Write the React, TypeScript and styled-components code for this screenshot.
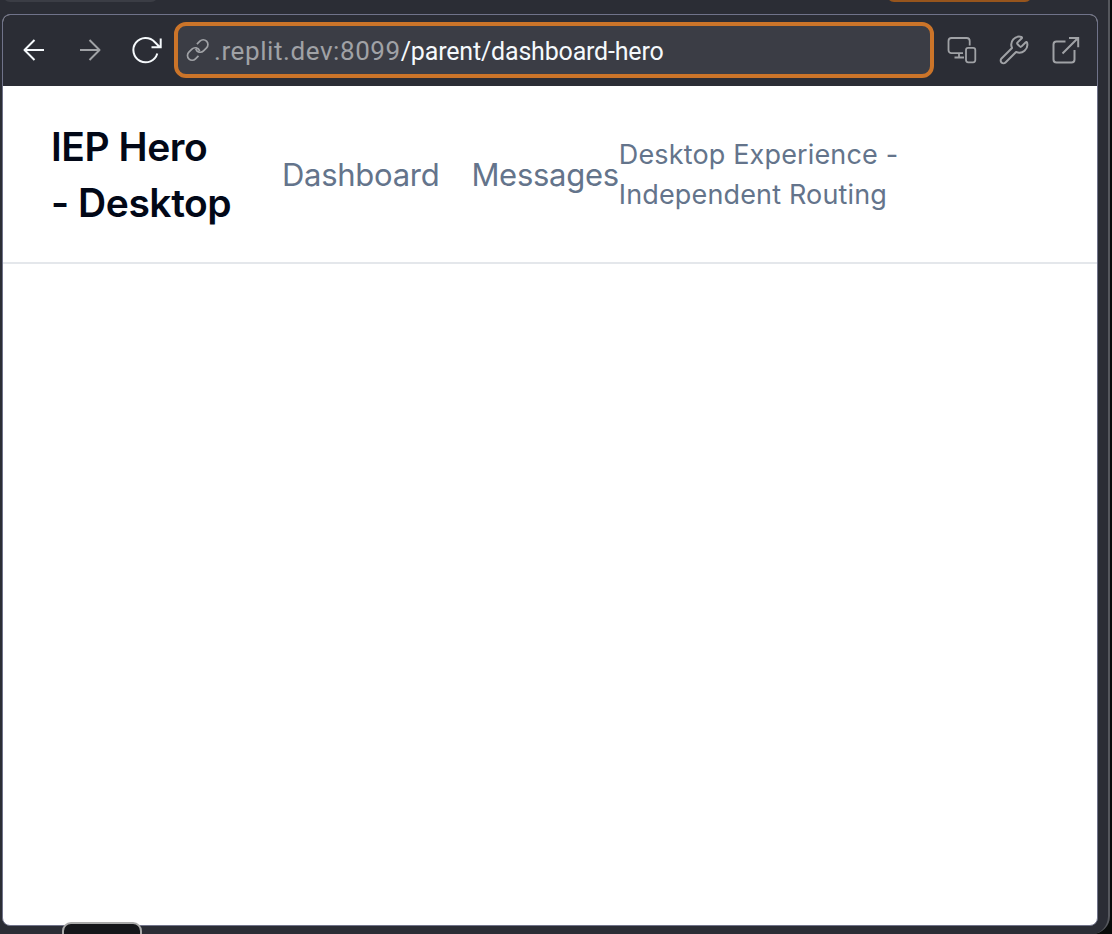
import React from "react";
import styled, { createGlobalStyle } from "styled-components";
import { Wrench } from "lucide-react";

const GlobalStyle = createGlobalStyle`
  *, *::before, *::after { box-sizing: border-box; }
  body { margin: 0; background: #090b0a; overflow: hidden; }
`;

const Workspace = styled.div`
  position: relative;
  width: 1110px;
  height: 934px;
  padding: 14px 11px 8px 2px;
  background: #2b2d35;
  border-right: 2px solid #55575d;
  border-bottom-right-radius: 18px;
  overflow: hidden;
`;

const TabEdge = styled.div<{ $left: number; $width: number; $color: string }>`
  position: absolute;
  top: -12px;
  left: ${(p) => p.$left}px;
  width: ${(p) => p.$width}px;
  height: 14px;
  border-radius: 8px;
  background: ${(p) => p.$color};
`;

const Pane = styled.section`
  display: flex;
  flex-direction: column;
  width: 1096px;
  height: 912px;
  border: 1px solid #70738a;
  border-radius: 8px;
  background: #fff;
  overflow: hidden;
`;

const Toolbar = styled.div`
  display: flex;
  align-items: center;
  flex: none;
  height: 71px;
  padding: 0 0 1px 15px;
  background: #2b2d35;
`;

const ToolButton = styled.button<{ $gap?: number; $color?: string }>`
  display: flex;
  flex: none;
  width: 32px;
  height: 32px;
  margin: 0 ${(p) => p.$gap ?? 0}px 0 0;
  padding: 0;
  border: 0;
  background: none;
  color: ${(p) => p.$color ?? "#a0a2a6"};

  svg { display: block; }
`;

const AddressBar = styled.div`
  display: flex;
  align-items: center;
  flex: none;
  width: 760px;
  height: 56px;
  margin: 0 11px 0 12px;
  padding-left: 8px;
  border: 4px solid #cb7429;
  border-radius: 12px;
  background: #3b3d45;
  color: #a0a2a6;

  svg { flex: none; }
`;

const Address = styled.span`
  margin-left: 4px;
  padding-top: 2px;
  font: 400 26px/34px Roboto, sans-serif;
  white-space: nowrap;
`;

const Host = styled.span`
  letter-spacing: 0.58px;
`;

const Path = styled.span`
  color: #f5f9fc;
  font-size: 25px;
  letter-spacing: -0.18px;
`;

const SiteHeader = styled.header`
  display: flex;
  align-items: center;
  flex: none;
  height: 178px;
  padding: 2px 48px 0;
  border-bottom: 2px solid #e4e7eb;
  font-family: Inter, sans-serif;
  color: #64748b;
`;

const Brand = styled.h1`
  width: 183px;
  margin: 0 48px 0 0;
  color: #020817;
  font-size: 39px;
  font-weight: 600;
  line-height: 56px;
  letter-spacing: -0.45px;
  white-space: nowrap;
`;

const Nav = styled.nav`
  display: flex;
  gap: 32px;
`;

const NavLink = styled.a`
  font-size: 31px;
  line-height: 48px;
  letter-spacing: -0.28px;
`;

const Note = styled.p`
  margin: 0;
  font-size: 27px;
  line-height: 40px;
  letter-spacing: 0.15px;
  white-space: nowrap;
`;

const DockHandle = styled.div`
  position: absolute;
  top: 922px;
  left: 62px;
  width: 80px;
  height: 24px;
  border: 2px solid #aaa;
  border-radius: 9px;
  background: #15161a;
`;

const Glyph = ({ children, size = 32, weight = 2 }: { children: React.ReactNode; size?: number; weight?: number }) => (
  <svg width={size} height={size} viewBox={`0 0 ${size} ${size}`} fill="none" stroke="currentColor" strokeWidth={weight} strokeLinejoin="round">
    {children}
  </svg>
);

export default function App() {
  return (
    <>
      <GlobalStyle />
      <Workspace>
        <TabEdge $left={3} $width={155} $color="#3b3d45" />
        <TabEdge $left={887} $width={145} $color="#97551d" />
        <Pane>
          <Toolbar>
            <ToolButton $gap={24} $color="#f5f9fc" aria-label="Back">
              <Glyph><path d="M26 16H6.500M16.500 6l-10 10 10 10" /></Glyph>
            </ToolButton>
            <ToolButton $gap={24} aria-label="Forward">
              <Glyph><path d="M6 16h19.500M15.500 6l10 10-10 10" /></Glyph>
            </ToolButton>
            <ToolButton $color="#f5f9fc" aria-label="Reload">
              <Glyph><path strokeLinejoin="miter" d="M27.300 19.500A12.200 12.200 0 1 1 24.700 8L29.900 13.200M30.700 4.500v8.700H21.500" /></Glyph>
            </ToolButton>
            <AddressBar>
              <Glyph size={24} weight={1.7}>
                <g transform="translate(11.700 12) rotate(-45)">
                  <path d="M-3.600 4.700H-7.800a4.700 4.700 0 0 1 0-9.400h4.300a4.700 4.700 0 0 1 4.200 6.800" />
                  <path d="M3.600-4.700h4.200a4.700 4.700 0 0 1 0 9.400H3.500a4.700 4.700 0 0 1-4.200-6.800" />
                </g>
              </Glyph>
              <Address><Host>.replit.dev:8099</Host><Path>/parent/dashboard-hero</Path></Address>
            </AddressBar>
            <ToolButton $gap={21} aria-label="Device size">
              <Glyph weight={1.8}>
                <path d="M18 19.200H6.500a3 3 0 0 1-3-3V7a3 3 0 0 1 3-3h15.200a3 3 0 0 1 3 3v4.500M14 19.200v4M9.500 23.500h9.500" />
                <rect x="21" y="13.800" width="9.300" height="14.500" rx="2.200" />
              </Glyph>
            </ToolButton>
            <ToolButton $gap={19} aria-label="Developer tools">
              <Wrench size={32} strokeWidth={1.5} />
            </ToolButton>
            <ToolButton aria-label="Open in new tab">
              <Glyph><path strokeLinejoin="miter" d="M16.500 7.500H7.500a3 3 0 0 0-3 3v15a3 3 0 0 0 3 3h15a3 3 0 0 0 3-3V16M13.500 19.500L29 4M20 4h9.200v9.200" /></Glyph>
            </ToolButton>
          </Toolbar>
          <SiteHeader>
            <Brand>IEP Hero<br />- Desktop</Brand>
            <Nav>
              <NavLink>Dashboard</NavLink>
              <NavLink>Messages</NavLink>
            </Nav>
            <Note>Desktop Experience -<br />Independent Routing</Note>
          </SiteHeader>
        </Pane>
        <DockHandle />
      </Workspace>
    </>
  );
}
